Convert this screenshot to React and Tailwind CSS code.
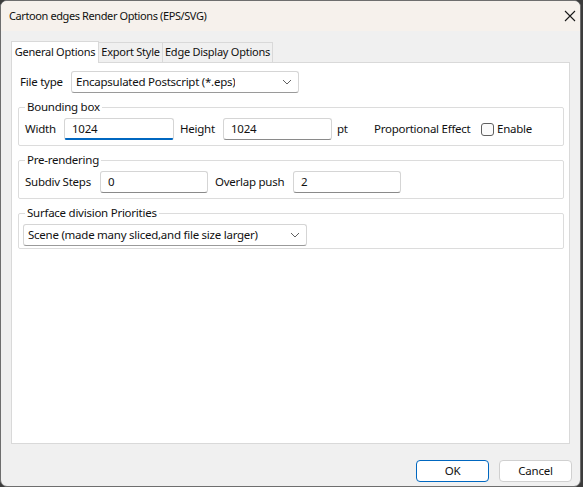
import React from 'react';

const font = { fontFamily: '"Noto Sans", "Open Sans", sans-serif' };

const Chevron = () => (
  <svg width="10" height="6" viewBox="0 0 10 6" className="shrink-0">
    <path d="M1 1 L5 5 L9 1" fill="none" stroke="#606060" strokeWidth="1" />
  </svg>
);

const Select = ({ value, className }) => (
  <div
    className={`flex items-center justify-between h-[22px] bg-white border border-[#d5d5d5] border-b-[#9a9a9a] rounded-[3px] pl-[4px] pr-[6px] ${className}`}
  >
    <span className="truncate">{value}</span>
    <Chevron />
  </div>
);

const Field = ({ value, className, focused }) => (
  <div
    className={`relative flex items-center h-[22px] bg-white border border-[#d5d5d5] rounded-[3px] pl-[7px] ${
      focused ? 'border-b-[#0067c0]' : 'border-b-[#8a8a8a]'
    } ${className}`}
  >
    {value}
    {focused && <div className="absolute left-0 right-0 -bottom-px h-[2px] bg-[#0067c0] rounded-b-[3px]" />}
  </div>
);

const Group = ({ title, children, className }) => (
  <fieldset className={`border border-[#dcdcdc] rounded-[2px] px-[6px] pt-[3px] ${className}`}>
    <legend className="px-[2px] leading-[16px]">{title}</legend>
    {children}
  </fieldset>
);

export default function App() {
  return (
    <div className="w-[583px] h-[487px] bg-[#3c3c3c] text-[11.5px] tracking-[-0.25px] text-[#111] whitespace-nowrap" style={font}>
      <div className="w-[581px] h-[487px] flex flex-col bg-[#f0f0f0] border border-[#6e6e6e] rounded-[7px] overflow-hidden">
        {/* title bar */}
        <div className="h-[30px] shrink-0 flex items-center justify-between bg-[#f6f1ec] pl-[8px] pr-[4px]">
          <span className="text-[11px] tracking-[-0.4px]">Cartoon edges Render Options (EPS/SVG)</span>
          <svg width="12" height="12" viewBox="0 0 12 12">
            <path d="M1 1 L11 11 M11 1 L1 11" stroke="#1a1a1a" strokeWidth="1.1" />
          </svg>
        </div>

        <div className="flex-1 flex flex-col px-[10px] pt-[9px]">
          {/* tabs */}
          <div className="flex items-end h-[22px] relative z-10 text-[11px]">
            <div className="h-[22px] w-[88px] flex items-center justify-center bg-white border border-b-0 border-[#d9d9d9] -mb-px pb-px">
              General Options
            </div>
            <div className="h-[20px] w-[64px] flex items-center justify-center border border-l-0 border-b-0 border-[#d9d9d9]">
              Export Style
            </div>
            <div className="h-[20px] w-[110px] flex items-center justify-center border border-l-0 border-b-0 border-[#d9d9d9]">
              Edge Display Options
            </div>
          </div>

          {/* panel */}
          <div className="h-[382px] bg-white border border-[#d9d9d9] pl-[6px] pr-[5px] pt-[8px]">
            <div className="flex items-center pl-[2px]">
              <span className="w-[51px]">File type</span>
              <Select value="Encapsulated Postscript (*.eps)" className="w-[228px]" />
            </div>

            <Group title="Bounding box" className="mt-[6px] pb-[5px]">
              <div className="flex items-center">
                <span className="w-[39px]">Width</span>
                <Field value="1024" focused className="w-[110px]" />
                <span className="ml-[6px] w-[43px]">Height</span>
                <Field value="1024" className="w-[109px]" />
                <span className="ml-[5px] w-[37px]">pt</span>
                <span className="w-[107px]">Proportional Effect</span>
                <span className="w-[13px] h-[13px] border border-[#606060] rounded-[3px] bg-[#fbfbfb]" />
                <span className="ml-[3px]">Enable</span>
              </div>
            </Group>

            <Group title="Pre-rendering" className="mt-[6px] pb-[5px]">
              <div className="flex items-center">
                <span className="w-[75px]">Subdiv Steps</span>
                <Field value="0" className="w-[108px]" />
                <span className="ml-[7px] w-[78px]">Overlap push</span>
                <Field value="2" className="w-[108px]" />
              </div>
            </Group>

            <Group title="Surface division Priorities" className="mt-[6px] pb-[2px]">
              <Select value="Scene (made many sliced,and file size larger)" className="w-[284px] -ml-[2px]" />
            </Group>
          </div>

          {/* buttons */}
          <div className="flex justify-end gap-[10px] mt-[16px] -mr-[2px]">
            <button className="w-[73px] h-[22px] bg-white border border-[#0067c0] rounded-[4px]">OK</button>
            <button className="w-[73px] h-[22px] bg-white border border-[#d0d0d0] rounded-[4px]">Cancel</button>
          </div>
        </div>
      </div>
    </div>
  );
}
